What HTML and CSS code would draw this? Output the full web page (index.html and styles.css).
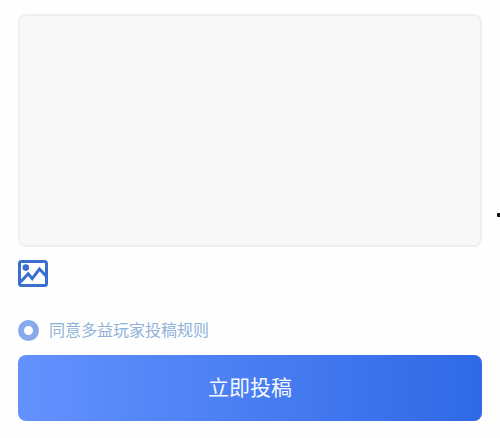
FILE: index.html
```
<!DOCTYPE html>
<html lang="zh-CN">
<head>
  <meta charset="UTF-8">
  <meta name="viewport" content="width=device-width, initial-scale=1.0">
  <title>投稿</title>
  <link rel="stylesheet" href="styles.css">
</head>
<body>
  <form class="post-form">
    <textarea class="content" aria-label="投稿内容"></textarea>

    <button type="button" class="upload" aria-label="上传图片">
      <svg viewBox="0 0 30 27" width="30" height="27" fill="none" stroke="#3a6fd0" stroke-width="3">
        <rect x="1.5" y="1.5" width="27" height="24" rx="2"/>
        <circle cx="7.8" cy="7.6" r="3.3" fill="#3a6fd0" stroke="none"/>
        <path d="M2 22.5 L10.2 13.8 L14.2 18.6 L21.5 9 L28.5 16.5"/>
      </svg>
    </button>

    <label class="agree" for="agree">
      <input type="radio" id="agree" name="agree" checked>
      <span>同意多益玩家投稿规则</span>
    </label>

    <button type="submit" class="submit">立即投稿</button>
  </form>

  <span class="edge-dot"></span>
</body>
</html>
```
FILE: styles.css
```
* {
  box-sizing: border-box;
}

body {
  position: relative;
  margin: 0;
  background-color: #fefefe;
  font-family: "Liberation Sans", "Noto Sans CJK SC", sans-serif;
  overflow-x: hidden;
}

.post-form {
  display: flex;
  flex-direction: column;
  align-items: flex-start;
  padding: 14px 18px 16px;
}

.content {
  width: 100%;
  height: 233px;
  padding: 12px;
  border: 2px solid #efefef;
  border-radius: 8px;
  background-color: #f8f8f8;
  font: inherit;
  resize: none;
  outline: none;
}

.upload {
  display: flex;
  margin-top: 13px;
  padding: 0;
  border: none;
  background: none;
  cursor: pointer;
}

.agree {
  display: flex;
  align-items: center;
  gap: 10px;
  margin-top: 33px;
  color: #8fb2d8;
  font-size: 16px;
  line-height: 21px;
  cursor: pointer;
}

/* Ring with a white centre */
.agree input {
  appearance: none;
  width: 21px;
  height: 21px;
  margin: 0;
  border: 6px solid #86aaec;
  border-radius: 50%;
  background-color: #fff;
}

.submit {
  width: 100%;
  height: 66px;
  margin-top: 14px;
  padding: 0 0 4px;
  border: none;
  border-radius: 8px;
  background: linear-gradient(to right, #6492ff, #2f69e5);
  color: #f4f8ff;
  font-family: inherit;
  font-size: 21px;
  cursor: pointer;
}

.edge-dot {
  position: absolute;
  top: 213px;
  right: 0;
  width: 3px;
  height: 4px;
  border-radius: 1px 0 0 1px;
  background-color: #111;
}
```
